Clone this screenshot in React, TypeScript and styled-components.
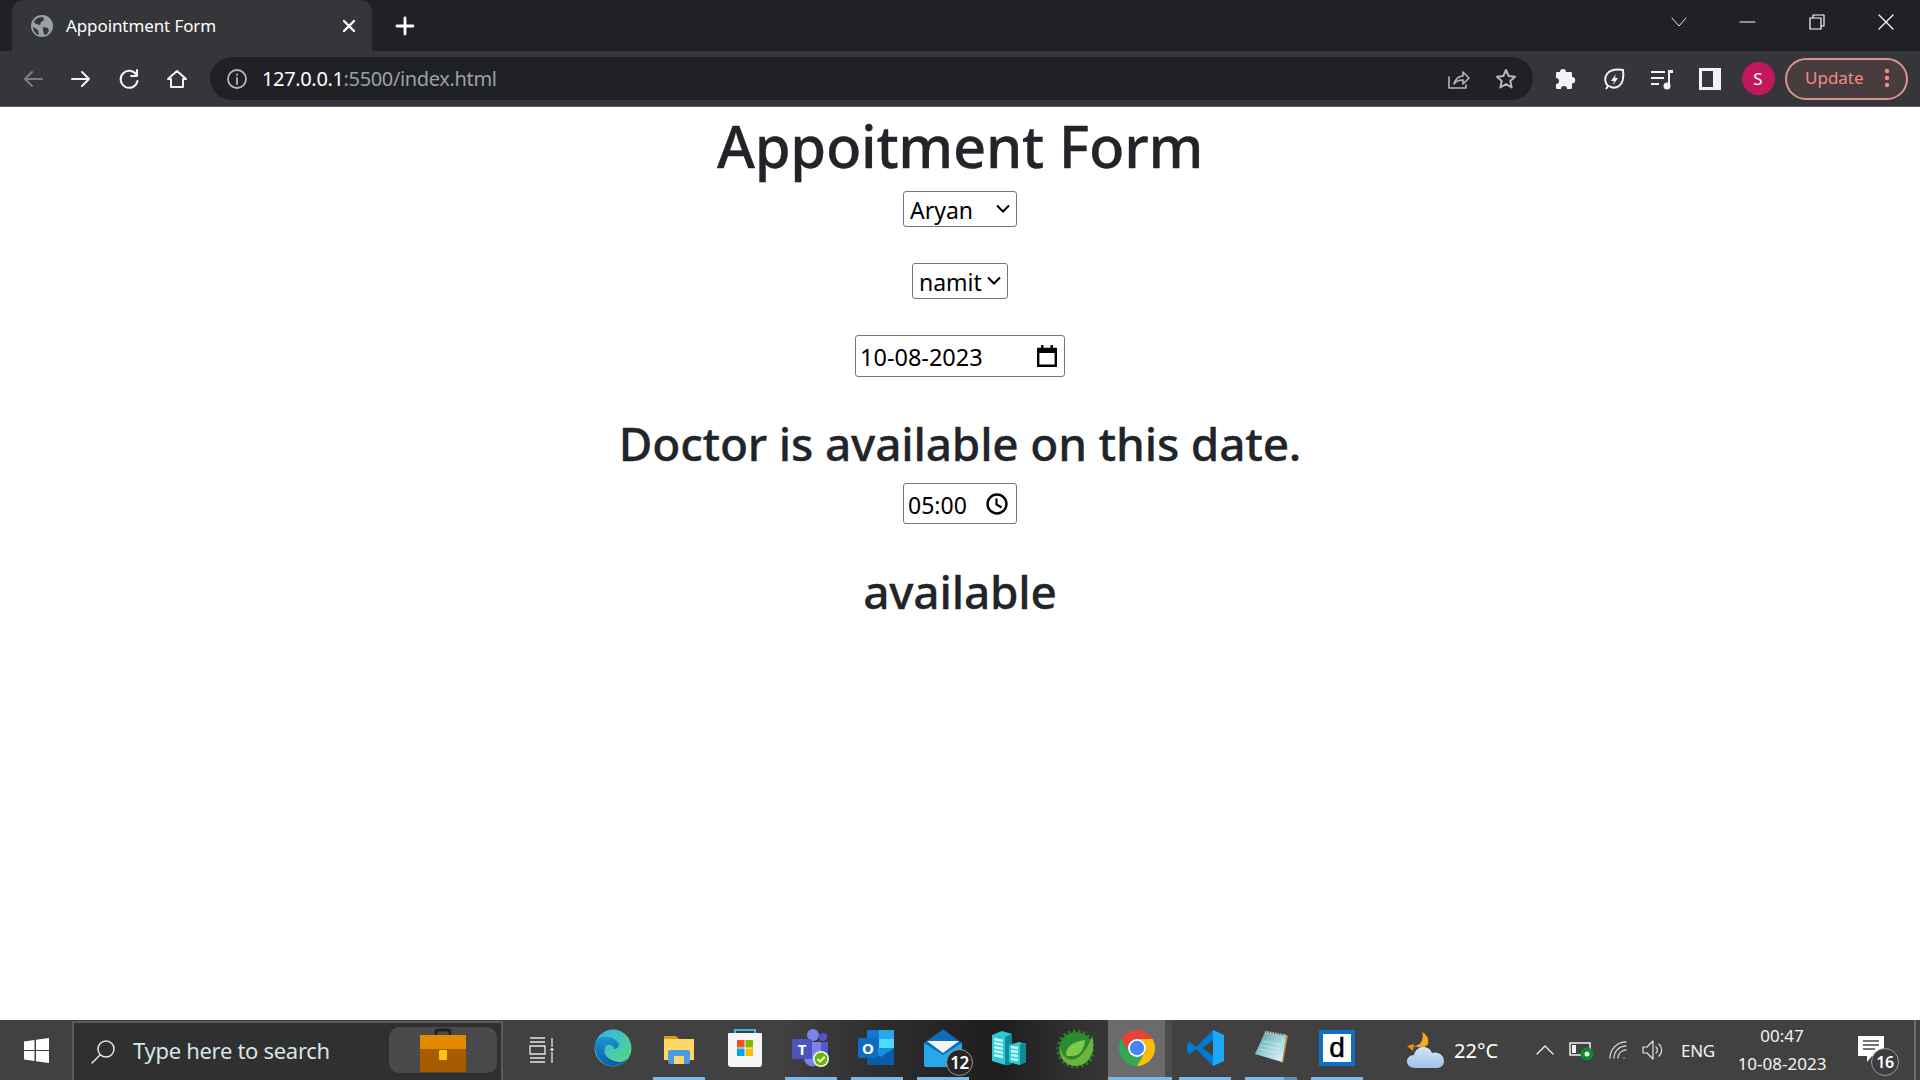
import React from "react";
import styled, { createGlobalStyle } from "styled-components";

const Global = createGlobalStyle`
  html, body { margin: 0; padding: 0; width: 1920px; height: 1080px; overflow: hidden; background: #fff; }
  * { box-sizing: border-box; }
  body { font-family: "Noto Sans", "Open Sans", sans-serif; }
`;

const Screen = styled.div`
  width: 1920px;
  height: 1080px;
  display: flex;
  flex-direction: column;
`;

/* ---------- browser chrome ---------- */
const TabStrip = styled.div`
  height: 51px;
  flex: none;
  background: #202124;
  display: flex;
  align-items: flex-end;
  padding-left: 12px;
`;
const Tab = styled.div`
  width: 360px;
  height: 51px;
  background: #35363a;
  border-radius: 12px 12px 0 0;
  display: flex;
  align-items: center;
  padding: 0 12px 0 19px;
  color: #fff;
  font-size: 17px;
  gap: 13px;
`;
const TabTitle = styled.span`
  flex: 1;
  letter-spacing: -0.1px;
`;
const NewTab = styled.div`
  width: 66px;
  height: 51px;
  display: flex;
  align-items: center;
  justify-content: center;
`;
const StripSpacer = styled.div`
  flex: 1;
`;
const WindowButton = styled.div<{ $w: number }>`
  width: ${(p) => p.$w}px;
  height: 44px;
  align-self: flex-start;
  display: flex;
  align-items: center;
  justify-content: center;
`;
const Toolbar = styled.div`
  height: 56px;
  flex: none;
  background: #35363a;
  border-bottom: 1px solid #5c5d60;
  display: flex;
  align-items: center;
  padding: 0 12px 0 9px;
`;
const ToolButton = styled.div`
  width: 48px;
  height: 48px;
  flex: none;
  display: flex;
  align-items: center;
  justify-content: center;
`;
const AddressBar = styled.div`
  flex: 1;
  height: 43px;
  margin: 0 9px;
  background: #202124;
  border-radius: 22px;
  display: flex;
  align-items: center;
  padding: 0 3px 0 16px;
  font-size: 20px;
`;
const AddressText = styled.div`
  flex: 1;
  margin-left: 14px;
  color: #9aa0a6;
  letter-spacing: -0.35px;
`;
const AddressHost = styled.span`
  color: #fff;
`;
const Avatar = styled.div`
  width: 33px;
  height: 33px;
  border-radius: 50%;
  background: #c2185b;
  color: #fff;
  font-size: 17px;
  display: flex;
  align-items: center;
  justify-content: center;
`;
const UpdatePill = styled.div`
  margin-left: 3px;
  width: 123px;
  height: 42px;
  border: 2px solid #d9948b;
  border-radius: 21px;
  background: #473d3f;
  color: #f28b82;
  font-size: 17px;
  line-height: 36px;
  display: flex;
  align-items: center;
  justify-content: space-between;
  padding: 0 16px 2px 18px;
`;

/* ---------- page ---------- */
const Page = styled.main`
  flex: 1;
  background: #fff;
  display: flex;
  flex-direction: column;
  align-items: center;
  color: #212529;
  min-height: 0;
`;
const Title = styled.h1`
  margin: 0 0 7px;
  height: 77px;
  font-size: 58px;
  line-height: 77px;
  font-weight: 500;
  letter-spacing: -0.3px;
  -webkit-text-stroke: 0.3px #212529;
`;
const Select = styled.select<{ $w: number; $mb: number; $arrow: number }>`
  display: block;
  appearance: none;
  width: ${(p) => p.$w}px;
  height: 36px;
  margin-bottom: ${(p) => p.$mb}px;
  font-family: "Noto Sans", sans-serif;
  font-size: 23px;
  color: #000;
  border: 1px solid #767676;
  border-radius: 3px;
  padding: 2px 2px 0 6px;
  background: #fff url("data:image/svg+xml,%3Csvg xmlns='http://www.w3.org/2000/svg' width='14' height='9' viewBox='0 0 14 9'%3E%3Cpath d='M1 1.5l6 6 6-6' fill='none' stroke='%23000' stroke-width='2'/%3E%3C/svg%3E") no-repeat ${(p) => p.$arrow}px 12px;
`;
const Field = styled.div<{ $w: number; $h: number; $pr: number; $fs: number }>`
  width: ${(p) => p.$w}px;
  height: ${(p) => p.$h}px;
  border: 1px solid #767676;
  border-radius: 3px;
  display: flex;
  align-items: center;
  justify-content: space-between;
  padding: 0 ${(p) => p.$pr}px 0 4px;
  font-size: ${(p) => p.$fs}px;
  color: #000;
`;
const FieldText = styled.span`
  margin-top: 2px;
`;
const Subtitle = styled.h2<{ $mt: number; $mb: number }>`
  margin: ${(p) => p.$mt}px 0 ${(p) => p.$mb}px;
  height: 58px;
  line-height: 58px;
  font-size: 46px;
  font-weight: 500;
  letter-spacing: -0.2px;
  -webkit-text-stroke: 0.3px #212529;
`;

/* ---------- taskbar ---------- */
const Taskbar = styled.footer`
  height: 60px;
  flex: none;
  display: flex;
  align-items: stretch;
  color: #fff;
  background: linear-gradient(90deg, #414141 0, #414141 780px, #2b2b2b 900px, #1d1d1d 1000px, #2e2e2e 1060px, #414141 1170px, #414141 100%);
`;
const StartButton = styled.div`
  width: 72px;
  display: flex;
  align-items: center;
  justify-content: center;
`;
const SearchBox = styled.div`
  width: 431px;
  margin-top: 1px;
  background: #303030;
  border: 2px solid #5a5a5a;
  border-bottom: none;
  display: flex;
  align-items: center;
  padding-left: 16px;
  font-size: 22px;
  color: #d9e4ea;
`;
const SearchText = styled.span`
  margin-left: 17px;
  padding-bottom: 4px;
  flex: 1;
  letter-spacing: -0.3px;
`;
const FeaturePill = styled.div`
  width: 108px;
  height: 46px;
  margin: 0 4px 4px 0;
  border-radius: 10px;
  background: #4a4a4a;
  display: flex;
  align-items: center;
  justify-content: center;
`;
const TaskView = styled.div`
  width: 75px;
  display: flex;
  align-items: center;
  justify-content: center;
`;
const Slot = styled.div<{ $open?: boolean }>`
  width: 52px;
  margin: 0 7px;
  position: relative;
  display: flex;
  align-items: center;
  justify-content: center;
  padding-bottom: 2px;
  border-bottom: 3px solid ${(p) => (p.$open ? "#76b9ed" : "transparent")};
`;
const EdgeSlot = styled(Slot)`
  margin-left: 9px;
`;
const ActiveSlot = styled.div`
  width: 64px;
  display: flex;
  align-items: center;
  justify-content: center;
  padding: 0 7px 2px 0;
  background: linear-gradient(90deg, #6b6b6b 0, #6b6b6b 57px, #4c4c4c 57px, #4c4c4c 64px);
  border-bottom: 3px solid #76b9ed;
`;
const StackedEdge = styled.div`
  position: absolute;
  right: 0;
  bottom: -3px;
  width: 13px;
  height: 3px;
  background: #5a8fb8;
`;
const Badge = styled.div`
  position: absolute;
  right: -4px;
  bottom: 1px;
  width: 27px;
  height: 27px;
  border-radius: 50%;
  background: #262626;
  border: 1px solid #9a9a9a;
  color: #fff;
  font-size: 17px;
  font-weight: 600;
  display: flex;
  align-items: center;
  justify-content: center;
  letter-spacing: -0.5px;
`;
const DBox = styled.div`
  width: 36px;
  height: 36px;
  background: #fff;
  border: 4px solid #0f6fc6;
  border-top-color: #0f6fc6;
  color: #000;
  font-family: "Liberation Sans", sans-serif;
  font-size: 28px;
  line-height: 28px;
  -webkit-text-stroke: 0.5px #000;
  display: flex;
  align-items: center;
  justify-content: center;
`;
const Weather = styled.div`
  margin-left: 37px;
  display: flex;
  align-items: center;
  gap: 9px;
  font-size: 20px;
  width: 102px;
`;
const Tray = styled.div`
  flex: 1;
  display: flex;
  align-items: center;
  padding-left: 18px;
`;
const TrayIcon = styled.div<{ $w: number }>`
  width: ${(p) => p.$w}px;
  flex: none;
  display: flex;
  align-items: center;
  justify-content: center;
`;
const Lang = styled.div`
  width: 58px;
  font-size: 17px;
  text-align: center;
  color: #f4f4f4;
  letter-spacing: -0.3px;
`;
const Clock = styled.div`
  width: 110px;
  font-size: 17px;
  line-height: 28px;
  text-align: center;
  color: #f4f4f4;
`;
const Notice = styled.div`
  flex: 1;
  height: 60px;
  position: relative;
  display: flex;
  align-items: center;
  padding-left: 21px;
`;
const NoticeBadge = styled(Badge)`
  right: 21px;
  bottom: 4px;
  width: 28px;
  height: 28px;
  background: #3c3c3c;
  font-size: 16px;
`;
const Sliver = styled.div`
  position: absolute;
  right: 4px;
  top: 0;
  width: 2px;
  height: 60px;
  background: #6e6e6e;
`;

/* ---------- icons ---------- */
const Line = { fill: "none", stroke: "currentColor", strokeLinecap: "round", strokeLinejoin: "round" } as const;

const Stroke = ({ size = 24, width = 2, color, d, box = 24 }: { size?: number; width?: number; color: string; d: string; box?: number }) => (
  <svg width={size} height={size} viewBox={`0 0 ${box} ${box}`} style={{ color }}>
    <path d={d} {...Line} strokeWidth={width} />
  </svg>
);

const Globe = () => (
  <svg width="22" height="22" viewBox="0 0 22 22">
    <circle cx="11" cy="11" r="11" fill="#9aa0a6" />
    <path d="M4 5c2-2 5-3 8-3l1 3-3 2-1 3-4-1-2-2zM12 12l5 1 1 3-3 4-2-1-1-4zM2 12l5 3 1 5c-3-1-6-4-6-8z" fill="#35363a" />
  </svg>
);
const Edge = () => (
  <svg width="38" height="38" viewBox="0 0 38 38">
    <defs>
      <linearGradient id="ed1" x1="0" y1="0" x2="1" y2="1"><stop offset="0" stopColor="#2ab5e8" /><stop offset="1" stopColor="#5fd97c" /></linearGradient>
      <linearGradient id="ed2" x1="0" y1="0" x2="0" y2="1"><stop offset="0" stopColor="#1b93d8" /><stop offset="1" stopColor="#0c5fa8" /></linearGradient>
    </defs>
    <circle cx="19" cy="19" r="18.5" fill="url(#ed1)" />
    <path d="M1 17C1 9 8 7 14 8c7 1 11 5 11 8 0 2-2 4-5 4 0-3-3-5-7-4-4 1-4 7-1 11 3 4 9 6 14 6 3 0 6-2 8-4-3 6-9 8-15 8C8 37 1 27 1 17z" fill="url(#ed2)" />
    <path d="M13 16c-4 1-4 7-1 11 3 4 9 6 14 6-7 3-13-2-15-7-1-4-1-9 2-10z" fill="#0b4f95" />
    <path d="M20 20c5 2 11 1 14-2 1 2 1 6-1 8-3 1-8 1-11-1-2-2-2-4-2-5z" fill="#4bcf98" />
  </svg>
);
const Folder = () => (
  <svg width="32" height="32" viewBox="0 0 32 32">
    <path d="M1 4h12l4 4H1z" fill="#d49d16" />
    <path d="M1 7h30v21H1z" fill="#ffd765" />
    <rect x="5" y="18" width="22" height="14" rx="2" fill="#4a9be0" />
    <rect x="11" y="24" width="10" height="8" fill="#ffd765" />
  </svg>
);
const Store = () => (
  <svg width="36" height="40" viewBox="0 0 36 40">
    <path d="M8 8V2h20v6" fill="none" stroke="#32bde8" strokeWidth="2" />
    <path d="M2 5h32a1 1 0 0 1 1 1v30a3 3 0 0 1-3 3H4a3 3 0 0 1-3-3V6a1 1 0 0 1 1-1z" fill="#f5f5f5" />
    <rect x="10" y="12" width="7.5" height="7.5" fill="#f25022" />
    <rect x="18.5" y="12" width="7.5" height="7.5" fill="#7fba00" />
    <rect x="10" y="20.5" width="7.5" height="7.5" fill="#00a4ef" />
    <rect x="18.5" y="20.5" width="7.5" height="7.5" fill="#ffb900" />
  </svg>
);
const Teams = () => (
  <svg width="40" height="40" viewBox="0 0 40 40">
    <circle cx="22" cy="7" r="6" fill="#7b83eb" />
    <circle cx="32" cy="9" r="4" fill="#5059c9" />
    <path d="M27 14h10v13a5 5 0 0 1-10 0z" fill="#5059c9" />
    <path d="M13 14h17v16a8 8 0 0 1-17 0z" fill="#7b83eb" />
    <rect x="1" y="11" width="20" height="20" rx="2" fill="#4b53bc" />
    <text x="11" y="27" textAnchor="middle" fontFamily="Noto Sans" fontWeight="700" fontSize="15" fill="#fff">T</text>
    <circle cx="30" cy="31" r="8" fill="#f4f4f4" />
    <circle cx="30" cy="31" r="6.5" fill="#6bb700" />
    <path d="M26.5 31l2.6 2.6 4.6-4.8" fill="none" stroke="#fff" strokeWidth="2" />
  </svg>
);
const Outlook = () => (
  <svg width="38" height="38" viewBox="0 0 38 38">
    <rect x="9" y="1" width="27" height="17" fill="#0f78d4" />
    <rect x="21" y="1" width="15" height="9" fill="#28a8ea" />
    <rect x="9" y="10" width="12" height="9" fill="#0f6fc6" />
    <rect x="21" y="10" width="15" height="9" fill="#50d9ff" />
    <path d="M9 19h27v17H9z" fill="#1490df" />
    <path d="M9 19l14 9 13-9v17H9z" fill="#0a5ba8" />
    <rect x="0" y="9" width="20" height="20" rx="2" fill="#0f6cbd" />
    <text x="10" y="25" textAnchor="middle" fontFamily="Noto Sans" fontWeight="700" fontSize="15" fill="#fff">O</text>
  </svg>
);
const Mail = () => (
  <svg width="38" height="38" viewBox="0 0 38 38">
    <path d="M0 14L18 1a2 2 0 0 1 2 0l18 13v4L19 28 0 18z" fill="#0f6cbd" />
    <path d="M3 12h32L19 24z" fill="#f4f4f4" />
    <path d="M0 14l19 12 19-12v22a2 2 0 0 1-2 2H2a2 2 0 0 1-2-2z" fill="#28a8ea" />
  </svg>
);
const Servers = () => (
  <svg width="36" height="36" viewBox="0 0 36 36">
    <path d="M1 5l10-4 10 3v30l-7 1L1 31z" fill="#2fcad6" />
    <path d="M14 7l7-3v30l-7 1z" fill="#0d8a96" />
    <path d="M3 9l9 2M3 13l9 2M3 17l9 2M3 21l9 2M3 25l9 2" stroke="#c6fbfd" strokeWidth="2.6" />
    <path d="M18 15l10-3 7 2v18l-7 3-10-3z" fill="#2fcad6" />
    <path d="M29 14l6-1v19l-6 3z" fill="#0d8a96" />
    <path d="M20 17l7 1M20 21l7 1M20 25l7 1M20 29l7 1" stroke="#c6fbfd" strokeWidth="2.4" />
  </svg>
);
const Spring = () => (
  <svg width="38" height="40" viewBox="0 0 38 40">
    <circle cx="20" cy="21" r="17" fill="#2a7a2a" stroke="#2a7a2a" strokeWidth="5" strokeDasharray="2.4 2.4" />
    <circle cx="20" cy="21" r="16.5" fill="#2c8a2f" />
    <path d="M36 8c4 12-1 29-16 30C8 38 3 28 4 20c3 12 13 15 20 8 5-5 9-11 12-20z" fill="#6db33f" />
    <path d="M10 27c0-9 7-13 19-15-1 10-6 17-14 16-2 0-4 0-5-1z" fill="#7ec94a" />
  </svg>
);
const Chrome = () => (
  <svg width="36" height="36" viewBox="4 4 40 40">
    <path d="M24 14h17.32A20 20 0 0 0 6.68 14l8.66 15A10 10 0 0 1 24 14z" fill="#ea4335" />
    <path d="M6.68 14A20 20 0 0 0 24 44l8.66-15A10 10 0 0 1 15.34 29z" fill="#34a853" />
    <path d="M41.32 14H24a10 10 0 0 1 8.66 15L24 44A20 20 0 0 0 41.32 14z" fill="#fbbc04" />
    <circle cx="24" cy="24" r="10" fill="#fff" />
    <circle cx="24" cy="24" r="8" fill="#4285f4" />
  </svg>
);
const VSCode = () => (
  <svg width="37" height="38" viewBox="0 0 37 38">
    <path d="M26 1L9 18 3 13 0 15v8l3 2 6-5 17 17 11-5V6z" fill="#0078d4" />
    <path d="M26 1l11 5v26l-11 5zM26 11L15 19l11 8z" fill="#1ea7f5" fillRule="evenodd" />
    <path d="M26 11L15 19l11 8z" fill="#414141" />
  </svg>
);
const Notepad = () => (
  <svg width="33" height="33" viewBox="0 0 33 33">
    <defs>
      <linearGradient id="np" x1="0" y1="0" x2="1" y2="1"><stop offset="0" stopColor="#4f9aa6" /><stop offset="0.6" stopColor="#a9dde0" /><stop offset="1" stopColor="#eef5f6" /></linearGradient>
    </defs>
    <path d="M29 3l4 2-5 27-2-1z" fill="#b98a3c" />
    <path d="M10 1l21 4-4 26L0 23z" fill="url(#np)" />
    <path d="M10 1l21 4" stroke="#bdbdbd" strokeWidth="3" strokeDasharray="1.5 1" />
    <path d="M8 10l19 4M6 14l19 4M5 18l19 4" stroke="#d4ecee" strokeWidth="1" opacity="0.7" />
  </svg>
);
const Briefcase = () => (
  <svg width="46" height="44" viewBox="0 0 46 44">
    <path d="M16 8V4a2 2 0 0 1 2-2h10a2 2 0 0 1 2 2v4" fill="none" stroke="#222" strokeWidth="3" />
    <rect x="0" y="7" width="46" height="37" rx="1" fill="#a85c00" />
    <path d="M1 7h44a1 1 0 0 1 1 1v13H0V8a1 1 0 0 1 1-1z" fill="#e38a00" />
    <rect x="19" y="22" width="8" height="10" rx="1" fill="#f7c711" />
  </svg>
);
const WeatherIcon = () => (
  <svg width="38" height="38" viewBox="0 0 38 38">
    <defs>
      <linearGradient id="cl" x1="0" y1="0" x2="0" y2="1"><stop offset="0" stopColor="#d8e6f6" /><stop offset="1" stopColor="#9fc2ea" /></linearGradient>
    </defs>
    <path d="M15 1c7 3 8 12 4 14-3 1-9 2-13 0 4 0 8-2 9-6 1-3 1-5 0-8z" fill="#f6a723" />
    <path d="M0 15l7-2-1 7z" fill="#f58a1f" />
    <path d="M8 37C3 37 0 34 0 30c0-3 3-6 7-6 1-5 6-9 11-8 4 1 6 3 7 6 6-2 12 2 12 8 0 4-3 7-7 7z" fill="url(#cl)" />
  </svg>
);

const App = () => (
  <Screen>
    <Global />
    <TabStrip>
      <Tab>
        <Globe />
        <TabTitle>Appointment Form</TabTitle>
        <Stroke size={22} width={2.4} color="#fff" d="M6 6l10 10M16 6L6 16" box={22} />
      </Tab>
      <NewTab>
        <Stroke size={22} width={2.8} color="#fff" d="M11 3v16M3 11h16" box={22} />
      </NewTab>
      <StripSpacer />
      <WindowButton $w={68}>
        <Stroke size={18} width={1} color="#e8e8e8" d="M2 5l7 8 7-8" box={18} />
      </WindowButton>
      <WindowButton $w={70}>
        <Stroke size={18} width={1.2} color="#fff" d="M1 9h15" box={18} />
      </WindowButton>
      <WindowButton $w={68}>
        <Stroke size={18} width={1.2} color="#fff" d="M2 5h11v11H2zM5 5V2h11v11h-3" box={18} />
      </WindowButton>
      <WindowButton $w={69}>
        <Stroke size={18} width={1.2} color="#fff" d="M2 2l14 14M16 2L2 16" box={18} />
      </WindowButton>
    </TabStrip>
    <Toolbar>
      <ToolButton><Stroke color="#7b7d80" d="M21 12H4M11 5l-7 7 7 7" /></ToolButton>
      <ToolButton><Stroke color="#f1f3f4" d="M3 12h17M13 5l7 7-7 7" /></ToolButton>
      <ToolButton><Stroke color="#f1f3f4" d="M19.5 8A8.5 8.5 0 1 0 20.5 14M20 3v6h-6" /></ToolButton>
      <ToolButton><Stroke color="#f1f3f4" d="M3 12l9-8 9 8h-3v8H6v-8z" /></ToolButton>
      <AddressBar>
        <Stroke size={22} color="#b5b8bb" width={1.8} d="M11 2a9 9 0 1 0 0 18a9 9 0 1 0 0-18M11 10v6M11 6.5v.5" box={22} />
        <AddressText><AddressHost>127.0.0.1</AddressHost>:5500/index.html</AddressText>
        <ToolButton><Stroke color="#b5b8bb" width={1.6} d="M3 10v11h17v-3M8 17c1-5 5-8 9-8V5l6 6-6 6v-4c-4 0-7 1-9 4z" /></ToolButton>
        <ToolButton><Stroke color="#b5b8bb" width={2} d="M12 3l2.7 6 6.3.7-4.7 4.3 1.3 6.5L12 17l-5.6 3.5L7.7 14 3 9.7 9.3 9z" /></ToolButton>
      </AddressBar>
      <ToolButton>
        <svg width="24" height="24" viewBox="0 0 24 24"><path d="M9 2a3 3 0 0 1 3 3h5a1 1 0 0 1 1 1v4a3.2 3.2 0 0 1 0 6.4V21a1 1 0 0 1-1 1h-4a3 3 0 0 0-6 0H3a1 1 0 0 1-1-1v-4a3 3 0 0 0 0-6V6a1 1 0 0 1 1-1h3a3 3 0 0 1 3-3z" fill="#f1f3f4" /></svg>
      </ToolButton>
      <ToolButton>
        <svg width="24" height="24" viewBox="0 0 24 24"><path d="M4 22l2-3c-3-3-4-8-1-12 3-4 9-5 16-4 1 7 0 13-4 16-3 2-7 2-10 0" fill="none" stroke="#f1f3f4" strokeWidth="2" /><path d="M14 7l-5 7h3l-1 4 5-7h-3z" fill="#f1f3f4" /></svg>
      </ToolButton>
      <ToolButton>
        <svg width="24" height="24" viewBox="0 0 24 24"><path d="M1 5h14M1 11h13M1 17h8" stroke="#f1f3f4" strokeWidth="2" /><path d="M18 3h5v3h-3v13h-2z" fill="#f1f3f4" /><circle cx="17" cy="19" r="3.5" fill="#f1f3f4" /></svg>
      </ToolButton>
      <ToolButton>
        <svg width="24" height="24" viewBox="0 0 24 24"><path d="M1 1h22v22H1zM4 4v16h11V4z" fill="#f1f3f4" fillRule="evenodd" /></svg>
      </ToolButton>
      <ToolButton><Avatar>S</Avatar></ToolButton>
      <UpdatePill>
        Update
        <svg width="6" height="20" viewBox="0 0 6 20"><circle cx="3" cy="3" r="2.2" fill="#f28b82" /><circle cx="3" cy="10" r="2.2" fill="#f28b82" /><circle cx="3" cy="17" r="2.2" fill="#f28b82" /></svg>
      </UpdatePill>
    </Toolbar>
    <Page>
      <Title>Appoitment Form</Title>
      <Select $w={114} $mb={36} $arrow={92} defaultValue="Aryan">
        <option>Aryan</option>
      </Select>
      <Select $w={96} $mb={36} $arrow={74} defaultValue="namit">
        <option>namit</option>
      </Select>
      <Field $w={210} $h={42} $pr={7} $fs={23.5}>
        <FieldText>10-08-2023</FieldText>
        <svg width="20" height="22" viewBox="0 0 20 22"><path d="M1.2 4h17.6v16.8H1.2z" fill="none" stroke="#000" strokeWidth="2.4" /><path d="M1 3h18v5H1zM4 0h2.5v4H4zM13.5 0H16v4h-2.5z" fill="#000" /></svg>
      </Field>
      <Subtitle $mt={37} $mb={11}>Doctor is available on this date.</Subtitle>
      <Field $w={114} $h={41} $pr={8} $fs={23}>
        <FieldText>05:00</FieldText>
        <svg width="22" height="22" viewBox="0 0 22 22"><circle cx="11" cy="11" r="9.5" fill="none" stroke="#000" strokeWidth="2.4" /><path d="M10.5 5.5v6l5 3" fill="none" stroke="#000" strokeWidth="2.2" /></svg>
      </Field>
      <Subtitle $mt={38} $mb={0}>available</Subtitle>
    </Page>
    <Taskbar>
      <StartButton>
        <svg width="25" height="25" viewBox="0 0 25 25"><path d="M0 3.5l10.5-1.5v10H0zM12 1.8L25 0v12H12zM0 13h10.5v10L0 21.5zM12 13h13v12l-13-1.8z" fill="#fff" /></svg>
      </StartButton>
      <SearchBox>
        <Stroke size={26} width={1.5} color="#e6e6e6" d="M16 2a8 8 0 1 0 0 16a8 8 0 1 0 0-16M10 16L2 24" box={26} />
        <SearchText>Type here to search</SearchText>
        <FeaturePill><Briefcase /></FeaturePill>
      </SearchBox>
      <TaskView>
        <svg width="26" height="26" viewBox="0 0 26 26"><path d="M2 1h15M2 5h15M2 21h15M2 25h15M2 9h15v8H2zM24 1v9M24 15v11" fill="none" stroke="#e6e6e6" strokeWidth="1.3" /><circle cx="24" cy="12.5" r="1.5" fill="#e6e6e6" /></svg>
      </TaskView>
      <EdgeSlot><Edge /></EdgeSlot>
      <Slot $open><Folder /></Slot>
      <Slot><Store /></Slot>
      <Slot $open><Teams /></Slot>
      <Slot $open><Outlook /></Slot>
      <Slot $open><Mail /><Badge>12</Badge></Slot>
      <Slot><Servers /></Slot>
      <Slot><Spring /></Slot>
      <ActiveSlot><Chrome /></ActiveSlot>
      <Slot $open><VSCode /></Slot>
      <Slot $open><Notepad /><StackedEdge /></Slot>
      <Slot $open><DBox>d</DBox></Slot>
      <Weather>
        <WeatherIcon />
        22°C
      </Weather>
      <Tray>
        <TrayIcon $w={36}><Stroke size={20} width={1.3} color="#f0f0f0" d="M2 14l8-8 8 8" box={20} /></TrayIcon>
        <TrayIcon $w={38}>
          <svg width="26" height="22" viewBox="0 0 26 22"><path d="M1 4h20v12H1z" fill="none" stroke="#f0f0f0" strokeWidth="1.5" /><rect x="3" y="6" width="4" height="8" fill="#f0f0f0" /><circle cx="18" cy="15" r="6.5" fill="#0b8a2f" /><circle cx="18" cy="15" r="2.5" fill="#e0f5e0" /></svg>
        </TrayIcon>
        <TrayIcon $w={36}><Stroke size={22} width={1.3} color="#cfcfcf" d="M2 19A16 16 0 0 1 18 3M6 19A12 12 0 0 1 18 7M10 19A8 8 0 0 1 18 11M16 19v.1" box={22} /></TrayIcon>
        <TrayIcon $w={32}><Stroke size={24} width={1.2} color="#e4e4e4" d="M2 9h4l6-6v18l-6-6H2zM15 9a4 4 0 0 1 0 6M18 6a8 8 0 0 1 0 12" /></TrayIcon>
        <Lang>ENG</Lang>
        <Clock>00:47<br />10-08-2023</Clock>
        <Notice>
          <svg width="26" height="28" viewBox="0 0 26 28"><path d="M0 0h26v20H14l-5 6v-6H0z" fill="#fff" /><path d="M5 5h16M5 9h16M5 13h12" stroke="#444" strokeWidth="1.4" /></svg>
          <NoticeBadge>16</NoticeBadge>
          <Sliver />
        </Notice>
      </Tray>
    </Taskbar>
  </Screen>
);

export default App;
